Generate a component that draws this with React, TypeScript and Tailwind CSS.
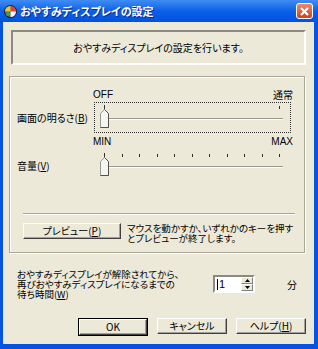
import React from "react";

// classic 3D button edges
const btn =
  "flex items-center justify-center h-[16px] bg-[#ece9d8] border border-t-white border-l-white border-r-[#404040] border-b-[#404040] shadow-[inset_-1px_-1px_0_#a0a0a0] text-[10px] leading-none text-black";

function TitleIcon() {
  return (
    <svg width="13" height="13" viewBox="0 0 13 13" className="block">
      <circle cx="6.5" cy="6.5" r="6" fill="#5a5a5a" stroke="#1e1e1e" />
      <path d="M6.5 1 A5.5 5.5 0 0 1 12 6.5 L6.5 6.5 Z" fill="#e0463c" />
      <path d="M6.5 6.5 L12 6.5 A5.5 5.5 0 0 1 6.5 12 Z" fill="#f4f4f4" />
      <path d="M1 6.5 A5.5 5.5 0 0 1 6.5 1 L6.5 6.5 Z" fill="#f0c23a" />
      <circle cx="4" cy="9" r="2" fill="#3aa84a" />
    </svg>
  );
}

function Thumb() {
  return (
    <svg width="9" height="19" viewBox="0 0 9 19" className="block shrink-0">
      <path d="M0.5 18.5 V4.5 L4.5 0.5 L8.5 4.5 V18.5 Z" fill="#f6f5ef" stroke="#9a9a92" />
      <path d="M4.5 0.5 L8.5 4.5 V18.5 H0.5" fill="none" stroke="#505050" />
    </svg>
  );
}

function Slider({ ticks, focus }: { ticks: number[]; focus?: boolean }) {
  return (
    <div
      className={
        "h-[31px] w-[197px] border " +
        (focus ? "border-dotted border-[#303030]" : "border-transparent")
      }
    >
      {/* tick marks */}
      <div className="ml-[9px] mt-[2px] flex h-[4px] w-[176px] items-end justify-between">
        {ticks.map((h, i) => (
          <div key={i} className={"w-px bg-[#303030] " + (h === 2 ? "h-[4px]" : "h-[3px]")} />
        ))}
      </div>
      <div className="ml-[5px] flex items-center">
        <Thumb />
        <div className="h-[2px] w-[174px] border-t border-t-[#9a9a92] border-b border-b-white" />
      </div>
    </div>
  );
}

export default function App() {
  return (
    <div className="flex h-[349px] w-[318px] flex-col bg-[#0553e3] font-['Noto_Sans_CJK_JP',sans-serif] text-black [font-feature-settings:'palt']">
      {/* Title bar */}
      <div className="flex h-[22px] items-center bg-linear-to-b from-[#3f8cf3] via-[#0b5fe8] to-[#0452dc] pl-[4px] pr-[5px]">
        <TitleIcon />
        <span className="ml-[3px] text-[11px] font-bold leading-none text-white [text-shadow:1px_1px_0_#0a2a8a]">
          おやすみディスプレイの設定
        </span>
        <div className="flex-1" />
        <div className="flex h-[16px] w-[17px] items-center justify-center rounded-[3px] border border-white bg-linear-to-b from-[#e98a6c] to-[#c8431e]">
          <svg width="9" height="9" viewBox="0 0 9 9">
            <path d="M1 1 L8 8 M8 1 L1 8" stroke="#fff" strokeWidth="2" />
          </svg>
        </div>
      </div>

      {/* Client area */}
      <div className="mb-[5px] ml-[3px] mr-[4px] flex flex-1 flex-col bg-[#ece9d8]">
        {/* Description */}
        <div className="ml-[8px] mt-[8px] flex h-[35px] w-[295px] items-center justify-center border-2 border-t-[#8a8a82] border-l-[#8a8a82] border-r-white border-b-white">
          <span className="text-[10px] leading-none">おやすみディスプレイの設定を行います。</span>
        </div>

        {/* Group box */}
        <div className="ml-[6px] mt-[11px] flex h-[177px] w-[296px] flex-col border border-[#a8a698] shadow-[inset_1px_1px_0_#fff,1px_1px_0_#fff]">
          <div className="ml-[83px] mt-[13px] flex h-[10px] w-[200px] items-center justify-between text-[10px] leading-none">
            <span className="font-['Liberation_Sans',sans-serif]">OFF</span>
            <span>通常</span>
          </div>
          <div className="mt-[2px] flex items-center">
            <span className="ml-[7px] w-[77px] text-[10px] leading-none">
              画面の明るさ(<span className="underline">B</span>)
            </span>
            <Slider ticks={[2, 1]} focus />
          </div>
          <div className="ml-[83px] mt-[4px] flex h-[10px] w-[200px] items-center justify-between font-['Liberation_Sans',sans-serif] text-[10px] leading-none">
            <span>MIN</span>
            <span>MAX</span>
          </div>
          <div className="mt-[3px] flex items-center">
            <span className="ml-[7px] w-[77px] text-[10px] leading-none">
              音量(<span className="underline">V</span>)
            </span>
            <Slider ticks={[2, 1, 1, 1, 1, 1, 1, 1, 1, 1, 1]} />
          </div>

          {/* separator */}
          <div className="ml-[13px] mt-[32px] h-[2px] w-[272px] border-t border-t-[#a8a698] border-b border-b-white" />

          <div className="ml-[13px] mt-[8px] flex items-start">
            <div className={btn + " w-[98px]"}>
              プレビュー(<span className="underline">P</span>)
            </div>
            <div className="ml-[6px] flex flex-col whitespace-nowrap text-[9.5px] leading-[10px]">
              <span>マウスを動かすか、いずれかのキーを押す</span>
              <span>とプレビューが終了します。</span>
            </div>
          </div>
        </div>

        {/* Wait time */}
        <div className="ml-[14px] mt-[16px] flex items-start">
          <div className="flex w-[196px] flex-col whitespace-nowrap text-[9.5px] leading-[10px]">
            <span>おやすみディスプレイが解除されてから、</span>
            <span>再びおやすみディスプレイになるまでの</span>
            <span>
              待ち時間(<span className="underline">W</span>)
            </span>
          </div>
          <div className="mt-[6px] flex h-[18px] w-[42px] border-2 border-t-[#8a8a82] border-l-[#8a8a82] border-r-white border-b-white bg-white">
            <span className="flex-1 pl-[2px] font-['Liberation_Sans',sans-serif] text-[11px] leading-[14px]">
              <span className="mr-px inline-block h-[11px] w-px translate-y-[2px] bg-black" />1
            </span>
            <div className="flex w-[12px] flex-col">
              <div className="flex flex-1 items-center justify-center bg-[#ece9d8] border border-t-white border-l-white border-r-[#808080] border-b-[#808080]">
                <svg width="5" height="3" viewBox="0 0 5 3">
                  <path d="M2.5 0 L5 3 H0 Z" fill="#000" />
                </svg>
              </div>
              <div className="flex flex-1 items-center justify-center bg-[#ece9d8] border border-t-white border-l-white border-r-[#808080] border-b-[#808080]">
                <svg width="5" height="3" viewBox="0 0 5 3">
                  <path d="M0 0 H5 L2.5 3 Z" fill="#000" />
                </svg>
              </div>
            </div>
          </div>
          <span className="ml-[32px] mt-[11px] text-[10px] leading-none">分</span>
        </div>

        {/* Buttons */}
        <div className="ml-[75px] mt-[19px] flex gap-[9px]">
          <div className="border border-black">
            <div className={btn + " w-[68px]"}>OK</div>
          </div>
          <div className={btn + " w-[70px]"}>キャンセル</div>
          <div className={btn + " w-[70px]"}>
            ヘルプ(<span className="underline">H</span>)
          </div>
        </div>
      </div>
    </div>
  );
}
